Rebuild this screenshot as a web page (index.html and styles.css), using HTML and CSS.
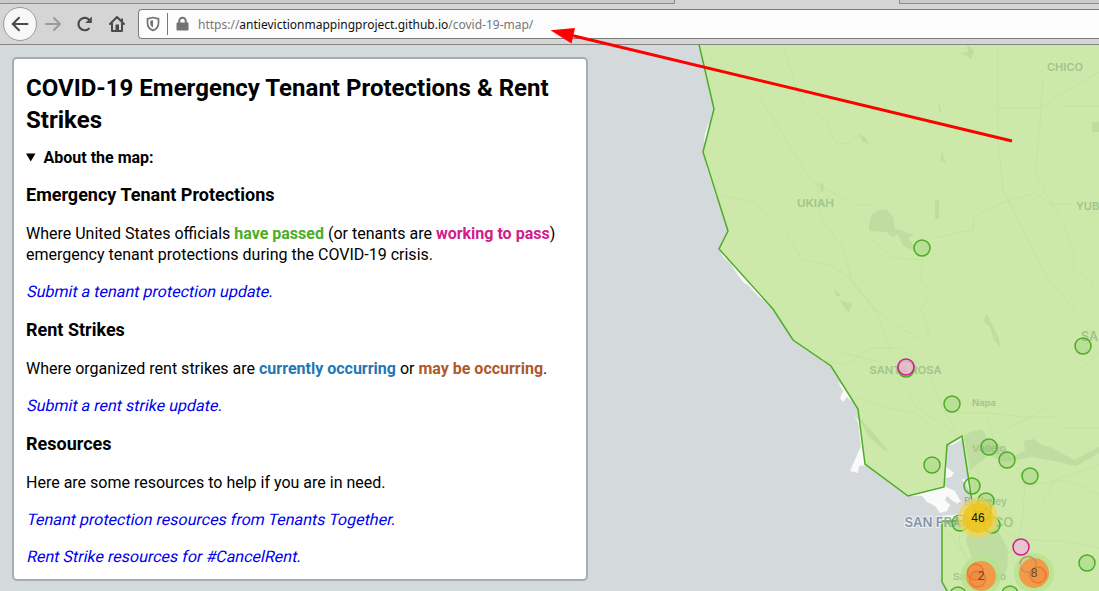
FILE: index.html
```html
<!DOCTYPE html>
<html lang="en">
<head>
<meta charset="utf-8">
<title>COVID-19 Emergency Tenant Protections &amp; Rent Strikes</title>
<link rel="stylesheet" href="styles.css">
</head>
<body>
<div class="window">
  <header class="browser">
    <div class="tabs"><span class="tab tab-left"></span><span class="tab tab-right"></span></div>
    <nav class="toolbar">
      <span class="back"><svg width="32" height="32" viewBox="0 0 32 32" fill="none" stroke="#4a4a4a" stroke-width="2" stroke-linecap="round" stroke-linejoin="round"><path d="M23.5 16H9M15 9.700L8.700 16L15 22.300"/></svg></span>
      <svg class="forward" width="18" height="16" viewBox="0 0 18 16" fill="none" stroke="#9b9b9b" stroke-width="2" stroke-linecap="round" stroke-linejoin="round"><path d="M2 8H16M10 2L16 8L10 14"/></svg>
      <svg class="reload" width="18" height="18" viewBox="0 0 18 18"><path d="M12.800 13.700A6.200 6.200 0 1 1 13.600 5.300" fill="none" stroke="#4a4a4a" stroke-width="2.200" stroke-linecap="round"/><path d="M15.800 1.500V8H9.300Z" fill="#4a4a4a"/></svg>
      <svg class="home" width="18" height="18" viewBox="0 0 18 18"><path d="M2 9L9 2L16 9M4 8V16H14V8" fill="none" stroke="#4a4a4a" stroke-width="2" stroke-linecap="round" stroke-linejoin="round"/><path d="M7.500 9.500H11V16H7.500Z" fill="#4a4a4a"/><path d="M13 3.500H15V7L13 5Z" fill="#4a4a4a"/></svg>
      <div class="urlbar">
        <svg class="shield" width="14" height="16" viewBox="0 0 14 16"><path d="M7 1.500L12.500 2.800V7C12.500 10.500 10.500 13.200 7 14.400C3.500 13.200 1.500 10.500 1.500 7V2.800Z" fill="none" stroke="#737373" stroke-width="1.700" stroke-linejoin="round"/><path d="M7 4.200V11.500C5 10.500 4.200 8.800 4.200 7V4.800Z" fill="#737373"/></svg>
        <span class="divider"></span>
        <svg class="lock" width="13" height="16" viewBox="0 0 13 16"><path d="M3.200 8V5A3.300 3.300 0 0 1 9.800 5V8" fill="none" stroke="#737373" stroke-width="2"/><rect x="0.500" y="6.500" width="12" height="8" rx="1" fill="#737373"/></svg>
        <span class="url">https://<b>antievictionmappingproject.github.io</b>/covid-19-map/</span>
      </div>
    </nav>
  </header>
  <main class="page">
    <svg class="map" viewBox="0 45 1099 546" width="1099" height="546">
      <defs>
        <linearGradient id="label" gradientUnits="userSpaceOnUse" x1="900" y1="0" x2="1020" y2="0">
          <stop offset=".34" stop-color="#8795aa"/><stop offset=".36" stop-color="#8fae97"/><stop offset=".65" stop-color="#98b690"/><stop offset=".7" stop-color="#a3c48c"/>
        </linearGradient>
        <linearGradient id="halo" gradientUnits="userSpaceOnUse" x1="900" y1="0" x2="1020" y2="0">
          <stop offset=".34" stop-color="#edf0f2"/><stop offset=".36" stop-color="#edf0f2" stop-opacity="0"/>
        </linearGradient>
      </defs>
      <rect x="0" y="45" width="1099" height="546" fill="#d4dadc"/>
      <g fill="#fafaf8">
        <path d="M709 122L705 134L704 142L707 141Z"/>
        <path d="M704 157L708 172L712 183L715 193L718 194L707 157Z"/>
        <path d="M719 249L723 257L731 264L737 274L744 283L748 285L756 294L763 300L776 312L773 306Z"/>
        <path d="M838 382L843 391L840 398L843 402L847 397L852 402L846 388Z"/>
        <path d="M854 416L858 422L861 446L850 471L858 473L859 466L867 465L862 423Z"/>
        <path d="M908 496L922 496L927 502L935 506L940 513L947 511L950 505L945 500L947 496L954 502L961 502L955 491L946 487L944 484Z"/>
        <path d="M947 445L962 436L961 440L952 445Z"/>
        <path d="M946 467L954 473L951 477L945 478Z"/>
        <path d="M962 479L972 481L975 505L970 492Z"/>
        <path d="M954 500L959 501L957 504Z"/>
        <path d="M942 516L960 514L985 500L985 530L942 530Z"/>
      </g>
      <path class="state" d="M698 40L714 109L703 152L728 231L719 249L773 309L793 340L831 366L858 409L865 464L908 496L944 487L947 445L962 436L974 515L971 521L942 521V582L950 596H1110V40Z"/>
      <g class="water">
        <path d="M869 224L872 214L879 210L887 210L893 217L895 229L900 230L908 233L913 235L908 238L913 245L916 251L903 246L898 234L892 237L887 232L869 231Z"/>
        <path d="M987 314L992 325L999 338L1000 347L994 340L990 327L983 321Z"/>
        <path d="M935 202L939 199V219L935 218Z"/>
        <path d="M820 183L824 185L823 193L820 190Z"/>
        <path d="M942 152L946 165L942 160L940 163Z"/>
        <path d="M967 45L974 50L971 59L967 56L961 53L968 52Z"/>
        <path d="M859 417L875 435L889 451L884 450L868 436Z"/>
        <path d="M938 99L942 114L939 111Z"/>
        <path d="M860 134L865 138L869 144L862 141Z"/>
        <path d="M834 289L841 295L836 297Z"/>
        <path d="M839 300L852 304L849 313L844 307Z"/>
        <path d="M964 436L972 431L982 430L989 440L1007 450L1011 458L1025 450L1024 441L1034 439L1042 445L1052 448L1074 460L1099 447V453L1076 466L1054 461L1032 457L1015 460L1004 462L989 455L970 470Z"/>
        <path d="M974 514L985 515L1000 534L1008 550L1007 570L996 585L989 585L973 561L966 541Z"/>
        <path d="M1092 122H1099V132H1092Z"/>
      </g>
      <g class="roads">
        <path d="M756 92L780 130L810 180L818 184L855 205L870 205"/>
        <path d="M783 45L795 85L806 107L826 120L836 144L849 143L860 134L880 156"/>
        <path d="M998 45V138L1003 190L1045 274L1099 340"/>
        <path d="M1043 80L1040 125L1035 172L1049 200L1063 223L1074 252L1073 270L1090 280L1095 292"/>
        <path d="M998 108H1040L1061 94L1099 72M1099 106H1060"/>
        <path d="M715 194L755 203L786 231L801 259L830 265L850 278L874 308L904 330L930 344"/>
        <path d="M817 182L820 216L843 248L852 282L875 310L890 350"/>
        <path d="M870 238L894 258L922 260L921 282L932 294L921 310L930 338"/>
        <path d="M935 238L960 232L973 231L974 216L1002 203L1034 193L1050 204H1072"/>
        <path d="M806 357L846 365L871 348L902 348L912 358L928 370L943 409L955 427"/>
        <path d="M842 353L880 362L906 388L917 408L951 430L976 447L1003 449"/>
        <path d="M858 398L890 409L916 413L933 430"/>
        <path d="M1009 428L1029 418L1047 406L1054 396L1080 370L1099 353"/>
        <path d="M957 413H989L1025 417H1055L1065 428L1099 428"/>
        <path d="M988 416L994 445L978 461L979 504L1005 531L1022 540L1060 541L1099 548"/>
        <path d="M1010 459L1025 480L1023 515L1016 548L1000 558"/>
        <path d="M1030 485L1065 480L1099 494M1040 507L1055 480L1099 465"/>
        <path d="M945 526L956 543L966 557L967 571L985 587M958 522L960 546L977 570"/>
      </g>
      <g class="city">
        <text x="1047" y="71" font-size="11" textLength="36" lengthAdjust="spacingAndGlyphs">CHICO</text>
        <text x="797" y="207" font-size="11" textLength="37" lengthAdjust="spacingAndGlyphs">UKIAH</text>
        <text x="1076" y="210" font-size="11">YUB</text>
        <text x="869.500" y="373.500" font-size="11" textLength="72" lengthAdjust="spacingAndGlyphs">SANTA ROSA</text>
        <text x="1081" y="341" font-size="12.500">SA</text>
        <text x="972" y="406" font-size="9" textLength="24" lengthAdjust="spacingAndGlyphs">Napa</text>
        <text x="972" y="452" font-size="9.500" textLength="34" lengthAdjust="spacingAndGlyphs">Vallejo</text>
        <text x="953" y="580" font-size="9.500" textLength="53" lengthAdjust="spacingAndGlyphs">San Mateo</text>
        <text class="city-bay" x="964" y="505" textLength="43" lengthAdjust="spacingAndGlyphs">Berkeley</text>
        <text class="city-major" x="904.500" y="527" textLength="109" lengthAdjust="spacingAndGlyphs">SAN FRANCISCO</text>
      </g>
      <g class="passed">
        <circle cx="922" cy="248" r="8"/><circle cx="1083" cy="346" r="8"/>
        <circle cx="906" cy="369" r="8"/><circle cx="952" cy="404" r="8"/>
        <circle cx="989" cy="447" r="8"/><circle cx="1007" cy="460" r="8"/>
        <circle cx="1030" cy="476" r="8"/><circle cx="932" cy="465" r="8"/>
        <circle cx="972" cy="486" r="8"/><circle cx="986" cy="501" r="8"/>
        <circle cx="983" cy="508" r="8"/><circle cx="992" cy="525" r="8"/>
        <circle cx="960" cy="523" r="8"/><circle cx="1087" cy="563" r="8"/>
        <circle cx="958" cy="595" r="8"/><circle cx="1010" cy="594" r="8"/>
      </g>
      <g class="working"><circle cx="906" cy="367" r="8"/><circle cx="1021" cy="547" r="8"/><circle cx="1028" cy="565" r="8" opacity=".45"/></g>
      <g class="clusters">
        <circle cx="978" cy="518" r="20" fill="#f1d357" fill-opacity=".75"/><circle cx="978" cy="518" r="15" fill="#efc51c" fill-opacity=".85"/>
        <circle cx="981" cy="576" r="20" fill="#b5e28c" fill-opacity=".75"/><circle cx="981" cy="576" r="15" fill="#f09a4a"/>
        <circle cx="1034" cy="573" r="20" fill="#b5e28c" fill-opacity=".75"/><circle cx="1034" cy="573" r="15" fill="#f09a4a"/>
        <g fill="#ee8030" fill-opacity=".25" stroke="#df672e" stroke-opacity=".65" stroke-width="1.300"><circle cx="975.500" cy="572" r="8"/><circle cx="977.500" cy="579" r="8"/><circle cx="1038" cy="575" r="8"/></g>
        <path d="M1020 564A8 8 0 0 1 1036 565A8 8 0 0 1 1021 568" fill="none" stroke="#bb7c63" stroke-opacity=".65" stroke-width="1.300"/>
        <path d="M972 509C976 514 984 513 990 505M991 510C991 516 986 520 984 523" fill="none" stroke="#d0b31b" stroke-opacity=".5"/>
        <text x="978" y="522">46</text><text x="981" y="580">2</text><text x="1034" y="577">8</text>
      </g>
    </svg>
    <section class="panel">
      <h1>COVID-19 Emergency Tenant Protections &amp; Rent Strikes</h1>
      <div class="summary"><svg width="10" height="9" viewBox="0 0 10 9"><path d="M0 0.500H9.500L4.750 8.500Z"/></svg>About the map:</div>
      <h2>Emergency Tenant Protections</h2>
      <p>Where United States officials <b class="green">have passed</b> (or tenants are <b class="pink">working to pass</b>) emergency tenant protections during the COVID-19 crisis.</p>
      <p><a>Submit a tenant protection update.</a></p>
      <h2>Rent Strikes</h2>
      <p>Where organized rent strikes are <b class="blue">currently occurring</b> or <b class="brown">may be occurring</b>.</p>
      <p><a>Submit a rent strike update.</a></p>
      <h2>Resources</h2>
      <p>Here are some resources to help if you are in need.</p>
      <p><a>Tenant protection resources from Tenants Together.</a></p>
      <p><a>Rent Strike resources for #CancelRent.</a></p>
    </section>
  </main>
  <svg class="arrow" width="1099" height="591" viewBox="0 0 1099 591"><path d="M570 35L1012 141" stroke="#f00" stroke-width="3"/><path d="M550.500 30.300L575 28L571.500 43.500Z" fill="#f00"/></svg>
</div>
</body>
</html>
```
FILE: styles.css
```css
* { box-sizing: border-box; }
body { margin: 0; overflow: hidden; }
.window { position: relative; width: 1099px; height: 591px; overflow: hidden; display: flex; flex-direction: column; font-family: Roboto, sans-serif; }
.browser { height: 45px; background: #d5d5d5; border-bottom: 1px solid #858585; display: flex; flex-direction: column; }
.tabs { height: 4px; display: flex; justify-content: space-between; }
.tab { background: #cbcbcb; border-bottom: 1px solid #8b8b8b; }
.tab-left { width: 675px; border-right: 1px solid #8b8b8b; }
.tab-right { width: 200px; border-left: 1px solid #8b8b8b; }
.toolbar { flex: 1; display: flex; align-items: center; padding-left: 3px; }
.back { width: 34px; height: 34px; border-radius: 50%; border: 1px solid #999; background: #f8f8f8; flex: none; }
.back svg { display: block; }
.toolbar svg { flex: none; }
.forward { margin-left: 7px; }
.reload { margin-left: 14px; }
.home { margin-left: 14px; }
.urlbar { margin-left: 12px; flex: 1; height: 30px; border: 1px solid #7c7c7c; border-right: 0; border-radius: 4px 0 0 4px; background: #fcfcfc; display: flex; align-items: center; }
.shield { margin-left: 7px; }
.divider { width: 1px; height: 22px; background: #777; margin: 0 8px 0 7px; }
.url { margin-left: 9px; padding-top: 1px; font: 12px/18px "Noto Sans", sans-serif; color: #777; white-space: nowrap; }
.url b { font-weight: 400; color: #111; }
.page { flex: 1; display: grid; background: #d4dadc; }
.map, .panel { grid-area: 1 / 1; }
.map { display: block; }
.panel { position: relative; margin: 12px 0 0 12px; width: 576px; height: 524px; padding: 13px 12px; background: #fff; border: 2px solid #a6adaf; border-radius: 5px; font-size: 16px; line-height: 21px; color: #000; }
.panel h1 { margin: 0 0 11px; font-size: 24px; line-height: 32px; font-weight: 700; letter-spacing: .01px; }
.panel h2 { margin: 0 0 16px; font-size: 18px; line-height: 24px; font-weight: 700; }
.panel p { margin: 0 0 16px; }
.summary { display: flex; align-items: center; gap: 7.5px; font-weight: 700; margin-bottom: 15px; }
.panel a { display: inline-block; vertical-align: top; color: #00e; transform: skewX(-12deg); transform-origin: 0 80%; }
.green { color: #4dac26; }
.pink { color: #d01c8b; }
.blue { color: #1f78b4; }
.brown { color: #b15928; }
.state { fill: #cbe9a5; fill-opacity: .93; stroke: #4dac26; stroke-width: 1.5; }
.water { fill: #b3d29a; fill-opacity: .5; }
.roads { fill: none; stroke: #b7d690; stroke-opacity: .35; stroke-width: 1; }
.city { font-family: Inter, sans-serif; font-weight: 600; fill: #a3c48c; }
.city-major { font-size: 13px; fill: url(#label); stroke: url(#halo); stroke-width: 2px; paint-order: stroke; }
.city-bay { font-size: 10px; fill: url(#label); }
.passed { fill: #4dac26; fill-opacity: .15; stroke: #4dac26; stroke-width: 1.5; }
.working { fill: #f1b6da; fill-opacity: .75; stroke: #d01c8b; stroke-width: 1.5; }
.clusters { font-family: "Liberation Sans", sans-serif; font-size: 12px; text-anchor: middle; }
.clusters text { fill: #5b4a35; }
.clusters text:first-of-type { fill: #111; }
.arrow { position: absolute; top: 0; left: 0; pointer-events: none; }
```
